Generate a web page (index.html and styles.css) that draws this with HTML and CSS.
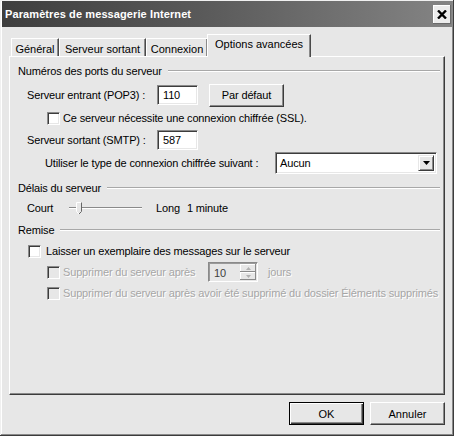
FILE: index.html
```html
<!DOCTYPE html>
<html lang="fr">

<head>
    <meta charset="UTF-8">
    <title>Paramètres de messagerie Internet</title>
    <link rel="stylesheet" href="styles.css">
</head>

<body>
    <div class="window">
        <div class="titlebar">
            <span class="title">Paramètres de messagerie Internet</span>
            <div class="close-btn">
                <svg width="10" height="9" viewBox="0 0 10 9">
                    <path d="M1 0.5 L9 8.5 M9 0.5 L1 8.5" stroke="#000" stroke-width="2.4" />
                </svg>
            </div>
        </div>

        <div class="client">
            <div class="tabs">
                <div class="tab tab-general">Général</div>
                <div class="tab tab-sortant">Serveur sortant</div>
                <div class="tab tab-connexion">Connexion</div>
                <div class="tab tab-options active">Options avancées</div>
            </div>

            <div class="panel">
                <div class="group-title first"><span>Numéros des ports du serveur</span></div>

                <div class="row row-pop">
                    <span class="port-label">Serveur entrant (POP3) :</span>
                    <div class="textbox port">110</div>
                    <div class="btn btn-defaut">Par défaut</div>
                </div>

                <div class="row row-check indent2">
                    <div class="checkbox"></div>
                    <span>Ce serveur nécessite une connexion chiffrée (SSL).</span>
                </div>

                <div class="row row-smtp">
                    <span class="port-label">Serveur sortant (SMTP) :</span>
                    <div class="textbox port">587</div>
                </div>

                <div class="row row-select">
                    <span class="select-label">Utiliser le type de connexion chiffrée suivant :</span>
                    <div class="select">
                        <span class="select-value">Aucun</span>
                        <div class="select-arrow">
                            <svg width="7" height="4" viewBox="0 0 7 4">
                                <path d="M0 0 H7 L3.5 4 Z" fill="#000" />
                            </svg>
                        </div>
                    </div>
                </div>

                <div class="group-title"><span>Délais du serveur</span></div>

                <div class="row row-slider">
                    <span class="court">Court</span>
                    <svg class="slider" width="76" height="16" viewBox="0 0 76 16">
                        <line x1="1" y1="6.5" x2="74" y2="6.5" stroke="#8a8a8a" />
                        <line x1="1" y1="7.5" x2="74" y2="7.5" stroke="#ffffff" />
                        <path d="M8.5 1.5 H13.5 V10.5 L11 13 L8.5 10.5 Z" fill="#e7e7e7" stroke="#fff" />
                        <path d="M13.5 1.5 V10.5 L11 13" fill="none" stroke="#666" />
                    </svg>
                    <span class="long">Long</span>
                    <span class="minute">1 minute</span>
                </div>

                <div class="group-title"><span>Remise</span></div>

                <div class="row row-laisser indent1">
                    <div class="checkbox"></div>
                    <span>Laisser un exemplaire des messages sur le serveur</span>
                </div>

                <div class="row row-supprimer indent2 disabled">
                    <div class="checkbox"></div>
                    <span class="apres">Supprimer du serveur après</span>
                    <div class="spinner">
                        <span class="spin-value">10</span>
                        <div class="spin-buttons">
                            <div class="spin-btn"><svg width="5" height="3" viewBox="0 0 5 3"><path d="M0 3 H5 L2.5 0 Z" fill="#b0b0b0" /></svg></div>
                            <div class="spin-btn"><svg width="5" height="3" viewBox="0 0 5 3"><path d="M0 0 H5 L2.5 3 Z" fill="#b0b0b0" /></svg></div>
                        </div>
                    </div>
                    <span class="jours">jours</span>
                </div>

                <div class="row row-supprimer2 indent2 disabled">
                    <div class="checkbox"></div>
                    <span>Supprimer du serveur après avoir été supprimé du dossier Éléments supprimés</span>
                </div>
            </div>

            <div class="footer">
                <div class="btn btn-ok">OK</div>
                <div class="btn btn-annuler">Annuler</div>
            </div>
        </div>
    </div>
</body>

</html>
```

FILE: styles.css
```css
body {
    margin: 0;
    font-family: "Liberation Sans", Arial, sans-serif;
    font-size: 11px;
    line-height: 14px;
    color: #000;
    background: #e7e7e7;
}

.window {
    width: 454px;
    height: 436px;
    box-sizing: border-box;
    background: #e7e7e7;
    padding: 1px 2px 0 2px;
    box-shadow: inset -1px -1px #3c3c3c, inset 1px 1px #f0f0f0, inset -2px -2px #8a8a8a, inset 2px 2px #ffffff;
}

.titlebar {
    height: 26px;
    display: flex;
    align-items: center;
    justify-content: space-between;
    padding: 0 1px 0 3px;
    background: linear-gradient(to right, #3e3e3e, #5a5a5a 45%, #848484);
}

.title {
    color: #fff;
    font-weight: bold;
    font-size: 11px;
    letter-spacing: 0.1px;
}

.close-btn {
    width: 18px;
    height: 19px;
    box-sizing: border-box;
    display: flex;
    align-items: center;
    justify-content: center;
    background: #ececec;
    box-shadow: inset -1px -1px #6a6a6a, inset 1px 1px #ffffff;
}

.client {
    margin: 0 -2px;
    padding: 0 9px;
}

.tabs {
    display: flex;
    align-items: flex-end;
    height: 22px;
    margin-top: 7px;
    padding-left: 2px;
}

.tab {
    height: 18px;
    box-sizing: border-box;
    padding-top: 3px;
    text-align: center;
    border-top: 1px solid #fff;
    border-left: 1px solid #fff;
    box-shadow: inset -1px 0 #8a8a8a;
    border-right: 1px solid #4a4a4a;
    white-space: nowrap;
}

.tab-general { width: 48px; }
.tab-sortant { width: 87px; }
.tab-connexion { width: 62px; }

.tab.active {
    width: 104px;
    margin-left: -1px;
    padding-top: 2px;
    position: relative;
    z-index: 1;
    margin-bottom: -1px;
    height: 23px;
    background: #e7e7e7;
}

.panel {
    height: 339px;
    box-sizing: border-box;
    padding: 7px 4px 0 8px;
    border-top: 1px solid #fff;
    border-left: 1px solid #fff;
    border-right: 1px solid #3c3c3c;
    border-bottom: 1px solid #3c3c3c;
    box-shadow: inset -1px -1px #8a8a8a;
    letter-spacing: -0.15px;
    white-space: nowrap;
}

.group-title {
    display: flex;
    align-items: center;
    margin-top: 7px;
    height: 14px;
}

.group-title.first {
    margin-top: 0;
}

.group-title::after {
    content: "";
    flex: 1;
    margin-left: 6px;
    border-top: 1px solid #a8a8a8;
    border-bottom: 1px solid #fff;
}

.row {
    display: flex;
    align-items: center;
}

.indent1 { padding-left: 10px; }
.indent2 { padding-left: 29px; }

.row-pop { margin-top: 6px; padding-left: 9px; height: 22px; }
.row-check { margin-top: 5px; height: 14px; }
.row-smtp { margin-top: 5px; padding-left: 9px; height: 20px; }
.row-select { margin-top: 2px; padding-left: 27px; height: 22px; }
.row-slider { margin-top: 5px; padding-left: 9px; height: 16px; }
.row-laisser { margin-top: 7px; height: 14px; }
.row-supprimer { margin-top: 4px; height: 20px; }
.row-supprimer2 { margin-top: 4px; height: 14px; }

.port-label {
    width: 130px;
}

.select-label {
    width: 230px;
}

.textbox {
    height: 20px;
    box-sizing: border-box;
    background: #fff;
    padding: 2px 0 0 5px;
    border: 1px solid;
    border-color: #8a8a8a #ffffff #ffffff #8a8a8a;
    box-shadow: inset 1px 1px #3c3c3c, inset -1px -1px #e7e7e7;
}

.port {
    width: 41px;
}

.btn {
    box-sizing: border-box;
    height: 23px;
    display: flex;
    align-items: center;
    justify-content: center;
    background: #e7e7e7;
    border: 1px solid;
    border-color: #ffffff #3c3c3c #3c3c3c #ffffff;
    box-shadow: inset -1px -1px #8a8a8a;
}

.btn-defaut {
    width: 75px;
    margin-left: 11px;
}

.checkbox {
    width: 13px;
    height: 13px;
    box-sizing: border-box;
    background: #fff;
    border: 1px solid;
    border-color: #8a8a8a #ffffff #ffffff #8a8a8a;
    box-shadow: inset 1px 1px #3c3c3c, inset -1px -1px #e7e7e7;
    margin-right: 3px;
    flex: none;
}

.row-laisser .checkbox {
    margin-right: 5px;
}

.select {
    width: 162px;
    height: 22px;
    box-sizing: border-box;
    display: flex;
    align-items: center;
    justify-content: space-between;
    background: #fff;
    border: 1px solid;
    border-color: #8a8a8a #ffffff #ffffff #8a8a8a;
    box-shadow: inset 1px 1px #3c3c3c, inset -1px -1px #e7e7e7;
    padding: 2px 2px 2px 4px;
}

.select-arrow {
    width: 16px;
    height: 16px;
    box-sizing: border-box;
    display: flex;
    align-items: center;
    justify-content: center;
    background: #e7e7e7;
    border: 1px solid;
    border-color: #e7e7e7 #3c3c3c #3c3c3c #e7e7e7;
    box-shadow: inset 1px 1px #fff, inset -1px -1px #8a8a8a;
}

.court {
    width: 41px;
}

.slider {
    display: block;
    margin-top: 1px;
}

.long {
    margin-left: 12px;
}

.minute {
    margin-left: 7px;
}

.disabled {
    color: #a6a6a6;
    text-shadow: 1px 1px #fff;
}

.disabled .checkbox {
    background: #e7e7e7;
}

.apres {
    width: 145px;
}

.spinner {
    width: 50px;
    height: 20px;
    box-sizing: border-box;
    display: flex;
    justify-content: space-between;
    border: 1px solid;
    border-color: #8a8a8a #ffffff #ffffff #8a8a8a;
    box-shadow: inset 1px 1px #9a9a9a;
    padding: 1px 1px 1px 5px;
    color: #404040;
    text-shadow: none;
}

.spin-value {
    padding-top: 2px;
}

.spin-buttons {
    display: flex;
    flex-direction: column;
    width: 16px;
}

.spin-btn {
    flex: 1;
    display: flex;
    align-items: center;
    justify-content: center;
    box-shadow: inset -1px -1px #8a8a8a, inset 1px 1px #fff;
}

.jours {
    margin-left: 10px;
}

.footer {
    display: flex;
    justify-content: flex-end;
    gap: 6px;
    padding-top: 7px;
}

.btn-ok {
    width: 75px;
    border: 1px solid #000;
    box-shadow: inset 1px 1px #fff, inset -1px -1px #3c3c3c, inset -2px -2px #8a8a8a;
}

.btn-annuler {
    width: 75px;
}
```
